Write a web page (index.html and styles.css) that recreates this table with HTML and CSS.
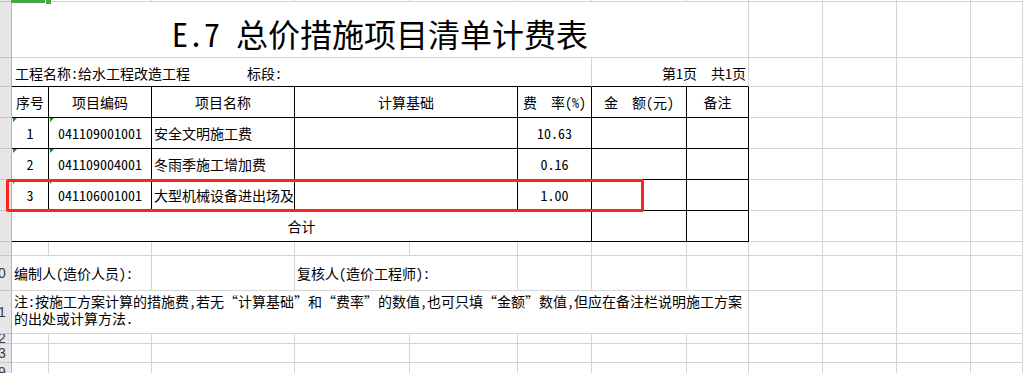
FILE: index.html
```html
<!DOCTYPE html>
<html lang="zh-CN">
<head>
<meta charset="utf-8">
<title>E.7 总价措施项目清单计费表</title>
<link rel="stylesheet" href="styles.css">
</head>
<body>
<div class="sheet">
  <!-- row 0 (stub) -->
  <div class="c g"></div>
  <div class="c"></div><div class="c"></div><div class="c"></div><div class="c"></div><div class="c"></div><div class="c"></div><div class="c"></div><div class="c"></div><div class="c"></div><div class="c"></div><div class="c"></div><div class="c"></div>

  <!-- title -->
  <div class="c g"></div>
  <div class="c s8 ctr title"><span class="lat">E.7</span><span>总价措施项目清单计费表</span></div>
  <div class="c"></div><div class="c"></div><div class="c"></div><div class="c"></div>

  <!-- info -->
  <div class="c g"></div>
  <div class="c s6 bb info"><span>工程名称:给水工程改造工程</span><span class="sect">标段:</span></div>
  <div class="c s2 bb right page"><span>第1页</span><span class="p2">共1页</span></div>
  <div class="c"></div><div class="c"></div><div class="c"></div><div class="c"></div>

  <!-- header -->
  <div class="c g"></div>
  <div class="c t ctr">序号</div>
  <div class="c t ctr">项目编码</div>
  <div class="c t ctr">项目名称</div>
  <div class="c t s2 ctr">计算基础</div>
  <div class="c t ctr">费　率(%)</div>
  <div class="c t ctr">金　额(元)</div>
  <div class="c t ctr">备注</div>
  <div class="c"></div><div class="c"></div><div class="c"></div><div class="c"></div>

  <!-- row 1 -->
  <div class="c g"></div>
  <div class="c t ctr flag">1</div>
  <div class="c t ctr flag">041109001001</div>
  <div class="c t pl">安全文明施工费</div>
  <div class="c t s2"></div>
  <div class="c t ctr">10.63</div>
  <div class="c t"></div>
  <div class="c t"></div>
  <div class="c"></div><div class="c"></div><div class="c"></div><div class="c"></div>

  <!-- row 2 -->
  <div class="c g"></div>
  <div class="c t ctr flag">2</div>
  <div class="c t ctr flag">041109004001</div>
  <div class="c t pl">冬雨季施工增加费</div>
  <div class="c t s2"></div>
  <div class="c t ctr">0.16</div>
  <div class="c t"></div>
  <div class="c t"></div>
  <div class="c"></div><div class="c"></div><div class="c"></div><div class="c"></div>

  <!-- row 3 -->
  <div class="c g"></div>
  <div class="c t ctr flag">3</div>
  <div class="c t ctr flag">041106001001</div>
  <div class="c t pl">大型机械设备进出场及</div>
  <div class="c t s2"></div>
  <div class="c t ctr">1.00</div>
  <div class="c t"></div>
  <div class="c t"></div>
  <div class="c"></div><div class="c"></div><div class="c"></div><div class="c"></div>

  <!-- total -->
  <div class="c g"></div>
  <div class="c t s6 ctr">合计</div>
  <div class="c t"></div>
  <div class="c t"></div>
  <div class="c"></div><div class="c"></div><div class="c"></div><div class="c"></div>

  <!-- blank -->
  <div class="c g"></div>
  <div class="c"></div><div class="c"></div><div class="c"></div><div class="c"></div><div class="c"></div><div class="c"></div><div class="c"></div><div class="c"></div><div class="c"></div><div class="c"></div><div class="c"></div><div class="c"></div>

  <!-- sign -->
  <div class="c g"><span class="rn">0</span></div>
  <div class="c s2 pl">编制人(造价人员):</div>
  <div class="c"></div>
  <div class="c s2 pl">复核人(造价工程师):</div>
  <div class="c"></div><div class="c"></div><div class="c"></div>
  <div class="c"></div><div class="c"></div><div class="c"></div><div class="c"></div>

  <!-- note -->
  <div class="c g"><span class="rn">1</span></div>
  <div class="c s8 pl note"><p class="note-text">注:按施工方案计算的措施费,若无“计算基础”和“费率”的数值,也可只填“金额”数值,但应在备注栏说明施工方案<br>的出处或计算方法.</p></div>
  <div class="c"></div><div class="c"></div><div class="c"></div><div class="c"></div>

  <!-- trailing rows -->
  <div class="c g"><span class="rn">2</span></div>
  <div class="c"></div><div class="c"></div><div class="c"></div><div class="c"></div><div class="c"></div><div class="c"></div><div class="c"></div><div class="c"></div><div class="c"></div><div class="c"></div><div class="c"></div><div class="c"></div>
  <div class="c g"><span class="rn">3</span></div>
  <div class="c"></div><div class="c"></div><div class="c"></div><div class="c"></div><div class="c"></div><div class="c"></div><div class="c"></div><div class="c"></div><div class="c"></div><div class="c"></div><div class="c"></div><div class="c"></div>
  <div class="c g"><span class="rn">9</span></div>
  <div class="c"></div><div class="c"></div><div class="c"></div><div class="c"></div><div class="c"></div><div class="c"></div><div class="c"></div><div class="c"></div><div class="c"></div><div class="c"></div><div class="c"></div><div class="c"></div>

  <!-- overlays -->
  <div class="sel-bar"></div>
  <div class="sel-handle"></div>
  <div class="mark"></div>
</div>
</body>
</html>
```

FILE: styles.css
```css
html, body {
  margin: 0;
  padding: 0;
  background: #fff;
}

body {
  font-family: "Noto Sans Mono CJK SC", "Noto Sans CJK SC", sans-serif;
  font-size: 14px;
  color: #000;
  overflow: hidden;
}

.sheet {
  position: relative;
  display: grid;
  grid-template-columns: 12px 37px 103px 143px 115px 108px 74px 95px 62px 74px 74px 74px 1fr;
  grid-template-rows: 2px 56px 29px 31px 31px 31px 31px 31px 14px 35px 43px 10px 19px 19px;
  width: 1023px;
  height: 373px;
  overflow: hidden;
}

.c {
  box-sizing: border-box;
  border-right: 1px solid #d4d4d4;
  border-bottom: 1px solid #d4d4d4;
  display: flex;
  align-items: center;
  white-space: nowrap;
  min-width: 0;
  position: relative;
  line-height: 17px;
}

.g {
  background: #e6e6e6;
  border-right-color: #b4b4b4;
  border-bottom-color: #c6c6c6;
  overflow: hidden;
}

.rn {
  font-family: "Liberation Sans", sans-serif;
  font-size: 14px;
  color: #3c3c3c;
  margin-left: -2px;
}

.t {
  border-right-color: #000;
  border-bottom-color: #000;
}

.bb {
  border-bottom-color: #000;
}

.ctr { justify-content: center; }
.right { justify-content: flex-end; }
.pl { padding-left: 2px; }

.s2 { grid-column: span 2; }
.s6 { grid-column: span 6; }
.s8 { grid-column: span 8; }

.title {
  font-size: 32px;
  line-height: 40px;
  padding-top: 6px;
}

.lat { margin-right: 16px; }

.info {
  padding-left: 3px;
  padding-top: 2px;
}

.sect { margin-left: 57px; }

.page {
  padding-right: 2px;
  padding-top: 2px;
}

.p2 { margin-left: 14px; }

.note {
  align-items: flex-start;
  padding-top: 2px;
}

.note-text {
  margin: 0;
  line-height: 17px;
}

/* green "number stored as text" corner flags */
.flag::before {
  content: "";
  position: absolute;
  left: 1px;
  top: 0;
  border-top: 4px solid #1f8a1f;
  border-right: 4px solid transparent;
}

/* selected-cell indicator at the very top */
.sel-bar {
  position: absolute;
  left: 11px;
  top: 0;
  width: 34px;
  height: 3px;
  background: #44a845;
}

.sel-handle {
  position: absolute;
  left: 46px;
  top: 0;
  width: 5px;
  height: 4px;
  background: #44a845;
}

/* red annotation box */
.mark {
  position: absolute;
  left: 6px;
  top: 179px;
  width: 638px;
  height: 33px;
  box-sizing: border-box;
  border: 3px solid #f8261b;
  border-radius: 2px;
}
```
